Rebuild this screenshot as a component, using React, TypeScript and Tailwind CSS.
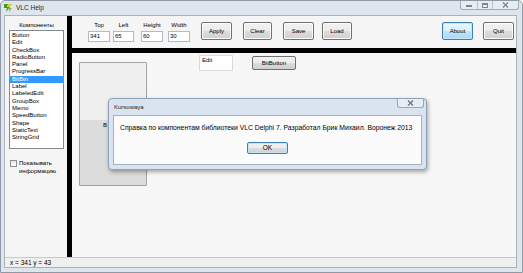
import React from "react";

const ITEMS = [
  "Button", "Edit", "CheckBox", "RadioButton", "Panel", "ProgressBar", "BitBtn", "Label",
  "LabeledEdit", "GroupBox", "Memo", "SpeedButton", "Shape", "StaticText", "StringGrid",
];

function AppIcon() {
  return (
    <svg width="10" height="10" viewBox="0 0 10 10">
      <path d="M1 1h4l-1 3h3L3 9l1-4H1z" fill="#3f9a2c" />
      <path d="M5 1h4L7 4H5z" fill="#e3c822" />
      <path d="M6 5h3L6 9z" fill="#8ac43f" />
    </svg>
  );
}

function Field({ label, value, w, ml }: { label: string; value: string; w: string; ml: string }) {
  return (
    <div className={`flex flex-col items-center mt-[5px] ${w} ${ml}`}>
      <span className="h-[9px] text-[6px] leading-[9px] whitespace-nowrap">{label}</span>
      <div className="mt-[1px] h-[11px] w-full border border-[#b5b9c0] bg-white px-[1px] text-[6px] leading-[9px]">{value}</div>
    </div>
  );
}

function Btn({ label, w, ml, primary }: { label: string; w: string; ml: string; primary?: boolean }) {
  return (
    <div
      className={`mt-[6px] flex h-[18px] items-center justify-center rounded-[2px] border text-[6px] ${w} ${ml} ${
        primary
          ? "border-[#3c7fb1] bg-[linear-gradient(#eaf6fd_0%,#d9f0fc_50%,#bee6fd_51%,#a7d9f5_100%)] shadow-[inset_0_0_0_1px_#c4e5f6]"
          : "border-[#707070] bg-[linear-gradient(#f2f2f2_0%,#ebebeb_50%,#dddddd_51%,#cfcfcf_100%)] shadow-[inset_0_0_0_1px_#fcfcfc]"
      }`}
    >
      {label}
    </div>
  );
}

export default function App() {
  return (
    <div className="relative h-[273px] w-[523px] overflow-hidden rounded-t-[5px] border border-[#8f99a4] bg-[#dfe5ec] font-['Liberation_Sans',Arial,sans-serif] text-black">
      {/* title bar */}
      <div className="flex h-[14px] items-center pl-[2px]">
        <AppIcon />
        <span className="ml-[3px] text-[6.5px] text-[#1e2833]">VLC Help</span>
        <div className="ml-auto mr-[3px] flex h-[9px] self-start rounded-b-[3px] border border-t-0 border-[#a2acb6] bg-[#e8edf2]">
          <div className="flex w-[16px] items-end justify-center pb-[2px]">
            <div className="h-[2px] w-[6px] border border-[#7b8793]" />
          </div>
          <div className="flex w-[15px] items-center justify-center border-l border-[#b9c2cb]">
            <div className="h-[5px] w-[6px] border border-[#7b8793] border-t-2" />
          </div>
          <div className="flex w-[26px] items-center justify-center border-l border-[#b9c2cb]">
            <svg width="7" height="6" viewBox="0 0 7 6">
              <path d="M1 0.5l5 5M6 0.5l-5 5" stroke="#7b8793" strokeWidth="1.4" />
            </svg>
          </div>
        </div>
      </div>

      {/* client */}
      <div className="ml-[3px] mr-[5px] flex h-[253px] flex-col border border-[#a9b2bc] bg-[#f5f5f5]">
        <div className="flex min-h-0 flex-1">
          {/* left panel */}
          <div className="flex w-[62px] flex-col">
            <div className="mt-[5px] ml-[4px] w-[55px] text-center text-[6px] leading-[8px]">Компоненты</div>
            <div className="mt-[1px] ml-[4px] h-[119px] w-[55px] border border-[#828790] bg-white pt-[1px]">
              {ITEMS.map((it) => (
                <div
                  key={it}
                  className={`h-[7.3px] pl-[2px] text-[6px] leading-[7.3px] ${it === "BitBtn" ? "bg-[#3399ff] text-white" : ""}`}
                >
                  {it}
                </div>
              ))}
            </div>
            <div className="mt-[10px] ml-[5px] flex items-start">
              <div className="mt-[1px] h-[7px] w-[7px] border border-[#8f8f8f] bg-[linear-gradient(#e6e6e6,#ffffff)]" />
              <div className="ml-[2px] text-[6px] leading-[8px]">
                Показывать
                <br />
                информацию
              </div>
            </div>
          </div>
          <div className="w-[5px] bg-black" />

          {/* right column */}
          <div className="flex min-w-0 flex-1 flex-col">
            <div className="flex h-[32px] items-start">
              <Field label="Top" value="341" w="w-[22px]" ml="ml-[16px]" />
              <Field label="Left" value="65" w="w-[21px]" ml="ml-[3px]" />
              <Field label="Height" value="60" w="w-[22px]" ml="ml-[7px]" />
              <Field label="Width" value="30" w="w-[22px]" ml="ml-[5px]" />
              <Btn label="Apply" w="w-[31px]" ml="ml-[11px]" />
              <Btn label="Clear" w="w-[29px]" ml="ml-[11px]" />
              <Btn label="Save" w="w-[31px]" ml="ml-[11px]" />
              <Btn label="Load" w="w-[30px]" ml="ml-[8px]" />
              <Btn label="About" w="w-[31px]" ml="ml-auto" primary />
              <Btn label="Quit" w="w-[31px]" ml="ml-[10px] mr-[2px]" />
            </div>
            <div className="h-[5px] bg-black" />

            {/* design canvas */}
            <div className="relative flex-1 bg-[#f7f7f7]">
              <div className="absolute left-[7px] top-[9px] flex h-[124px] w-[68px] flex-col overflow-hidden rounded-[1px] border border-[#a3a3a3]">
                <div className="h-[57px] bg-[#f0f0f0]" />
                <div className="flex-1 bg-[#dcdcdc] pl-[23px] pt-[1px] text-[6px] leading-[8px]">B</div>
              </div>
              <div className="absolute left-[127px] top-[2px] h-[16px] w-[34px] border border-[#dadada] bg-white px-[2px] text-[6px] leading-[9px]">
                Edit
              </div>
              <div className="absolute left-[180px] top-[3px] flex h-[14px] w-[44px] items-center justify-center rounded-[2px] border border-[#707070] bg-[linear-gradient(#f2f2f2_0%,#ebebeb_50%,#dddddd_51%,#cfcfcf_100%)] text-[6px]">
                BitButton
              </div>
            </div>
          </div>
        </div>
        <div className="h-[10px] border-t border-[#c9c9c9] bg-[#f0f0f0] pl-[5px] text-[6.5px] leading-[10px]">x = 341 y = 43</div>
      </div>

      {/* message dialog */}
      <div className="absolute left-[107px] top-[97px] flex h-[72px] w-[319px] flex-col rounded-[4px] border border-[#8fa3b8] bg-[#d9e4f0] shadow-[1px_2px_4px_rgba(0,0,0,0.35)]">
        <div className="flex h-[16px] items-start">
          <span className="ml-[5px] mt-[5px] text-[6px] leading-[7px] text-[#1e2833]">Kursowaya</span>
          <div className="ml-auto mr-[2px] flex h-[9px] w-[27px] items-center justify-center rounded-b-[3px] border border-t-0 border-[#9aa8b6] bg-[#e7edf3]">
            <svg width="7" height="6" viewBox="0 0 7 6">
              <path d="M1 0.5l5 5M6 0.5l-5 5" stroke="#6d7884" strokeWidth="1.4" />
            </svg>
          </div>
        </div>
        <div className="mx-[4px] mb-[4px] flex flex-1 flex-col items-center border border-[#a4b3c3] bg-[#fbfbfb]">
          <div className="mt-[7px] self-start pl-[6px] text-[6.8px] leading-[9px] whitespace-nowrap">
            Справка по компонентам библиотеки VLC Delphi 7. Разработал Брик Михаил. Воронеж 2013
          </div>
          <div className="mt-[10px] flex h-[12px] w-[41px] items-center justify-center rounded-[2px] border border-[#3c7fb1] bg-[linear-gradient(#f2f2f2_0%,#ebebeb_50%,#dddddd_51%,#cfcfcf_100%)] shadow-[inset_0_0_0_1px_#c4e5f6] text-[6.5px]">
            OK
          </div>
        </div>
      </div>
    </div>
  );
}
